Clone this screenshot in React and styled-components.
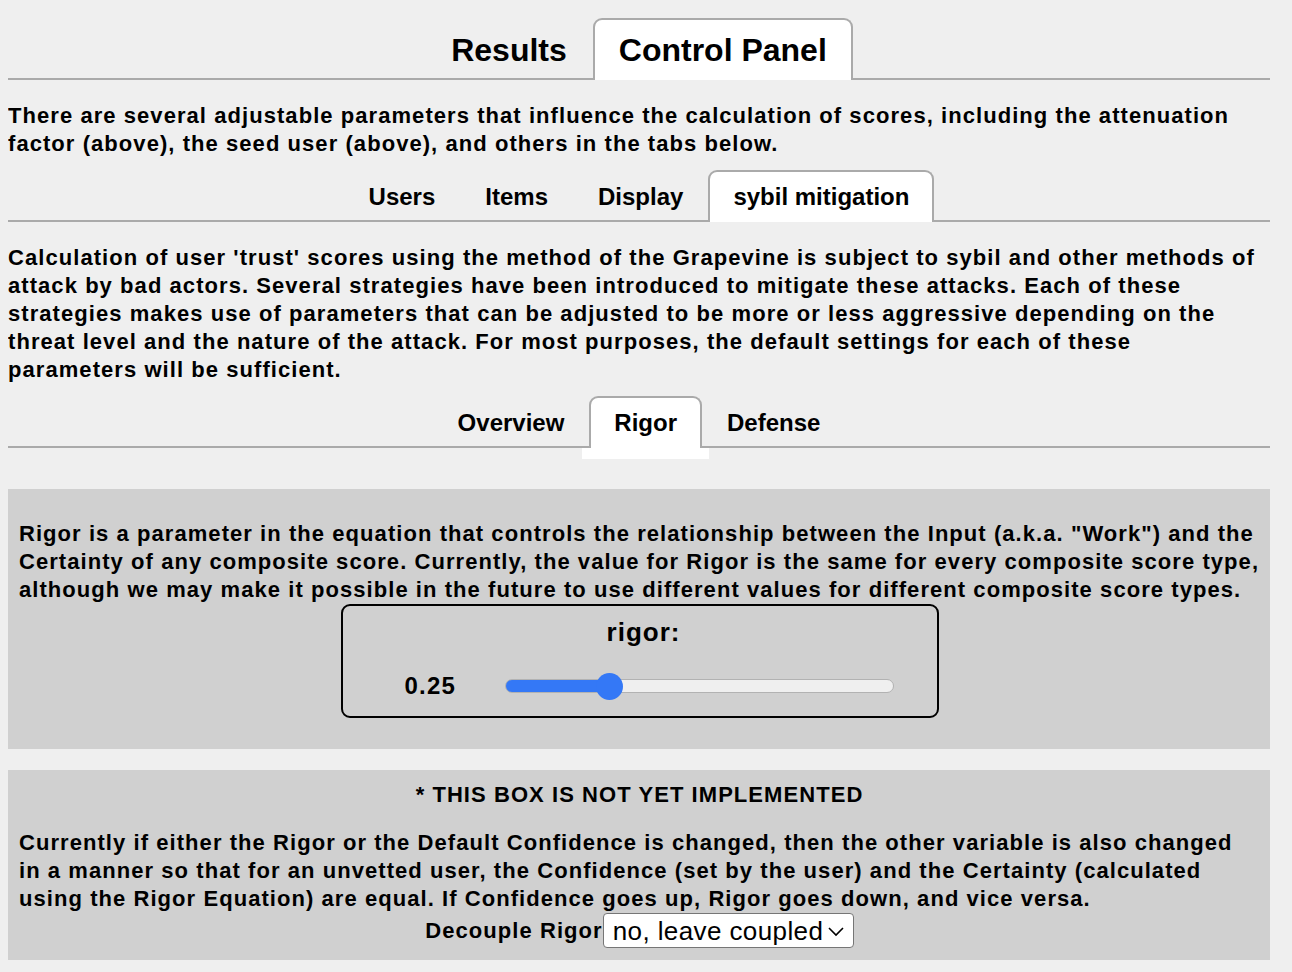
import React, { useState } from "react";
import styled, { createGlobalStyle } from "styled-components";

const GlobalStyle = createGlobalStyle`
  body {
    margin: 8px;
    background: #efefef;
    font-family: "Liberation Sans", Helvetica, Arial, sans-serif;
    color: #000;
  }
`;

const Page = styled.div`
  width: 1262px;
  padding-top: 10px;
`;

const TabBar = styled.div`
  display: flex;
  justify-content: center;
  align-items: flex-end;
  border-bottom: 2px solid #aaa;
`;

const Tab = styled.div`
  position: relative;
  font-weight: bold;
  font-size: ${(p) => (p.big ? "32px" : "24px")};
  line-height: ${(p) => (p.big ? "37px" : "28px")};
  padding: ${(p) => (p.big ? "12px 24px 11px" : "11px 23px")};
  border: 2px solid ${(p) => (p.active ? "#aaa" : "transparent")};
  border-bottom: 0;
  border-radius: 9px 9px 0 0;
  margin-bottom: -2px;
  background: ${(p) => (p.active ? "#fff" : "transparent")};
  white-space: nowrap;
  cursor: pointer;

  ${(p) =>
    p.foot &&
    `
    &::after {
      content: "";
      position: absolute;
      left: -9px;
      right: -9px;
      top: 100%;
      height: 11px;
      background: #fff;
    }
  `}
`;

const Text = styled.p`
  font-weight: bold;
  font-size: 22px;
  line-height: 28px;
  letter-spacing: 1.06px;
  margin: ${(p) => p.margin || "22px 0 12px"};
  text-align: ${(p) => p.align || "left"};
`;

const Panel = styled.div`
  background: #d0d0d0;
  padding: ${(p) => p.pad};
  margin-top: ${(p) => p.top};
`;

const SliderBox = styled.div`
  width: 594px;
  margin: 0 auto;
  border: 2px solid #000;
  border-radius: 9px;
  padding: 11px 0 14px;
`;

const SliderTitle = styled.div`
  text-align: center;
  font-weight: bold;
  font-size: 26px;
  line-height: 30px;
  letter-spacing: 1px;
  padding-left: 8px;
`;

const SliderRow = styled.div`
  display: flex;
  align-items: center;
  height: 32px;
  margin-top: 23px;
  padding-left: 62px;
  gap: 50px;
`;

const Value = styled.div`
  font-weight: bold;
  font-size: 24px;
  letter-spacing: 1.2px;
  width: 50px;
`;

const TRACK_W = 389;
const THUMB = 27;

const Range = styled.input`
  -webkit-appearance: none;
  appearance: none;
  width: ${TRACK_W}px;
  height: ${THUMB}px;
  margin: 0;
  background: transparent;

  &::-webkit-slider-runnable-track {
    height: 14px;
    border-radius: 7px;
    box-sizing: border-box;
    border: 1px solid #b2b2b2;
    background: linear-gradient(
      to right,
      #3478f6 0,
      #3478f6 ${(p) => p.fill}%,
      #efefef ${(p) => p.fill}%,
      #efefef 100%
    );
  }

  &::-webkit-slider-thumb {
    -webkit-appearance: none;
    width: ${THUMB}px;
    height: ${THUMB}px;
    border-radius: 50%;
    background: #3478f6;
    margin-top: -7.5px;
    border: 0;
  }
`;

const ChoiceRow = styled.div`
  display: flex;
  justify-content: center;
  align-items: center;
`;

const Label = styled.span`
  font-weight: bold;
  font-size: 22px;
  letter-spacing: 1.06px;
`;

const Select = styled.select`
  -webkit-appearance: none;
  appearance: none;
  font-family: "Liberation Sans", Helvetica, Arial, sans-serif;
  font-size: 26px;
  letter-spacing: 0.4px;
  height: 35px;
  width: 251px;
  padding: 0 30px 0 9px;
  border: 1px solid #767676;
  border-radius: 4px;
  color: #000;
  background: #fff
    url("data:image/svg+xml,%3Csvg xmlns='http://www.w3.org/2000/svg' width='18' height='12' viewBox='0 0 18 12'%3E%3Cpath d='M2 3l7 7 7-7' fill='none' stroke='%23000' stroke-width='1.6'/%3E%3C/svg%3E")
    no-repeat right 8px center;
`;

export default function App() {
  const [rigor, setRigor] = useState(0.25);
  const fill = ((rigor * (TRACK_W - THUMB) + THUMB / 2) / TRACK_W) * 100;

  return (
    <Page>
      <GlobalStyle />
      <TabBar>
        <Tab big>Results</Tab>
        <Tab big active>
          Control Panel
        </Tab>
      </TabBar>
      <Text>
        There are several adjustable parameters that influence the calculation of
        scores, including the attenuation factor (above), the seed user (above),
        and others in the tabs below.
      </Text>
      <TabBar>
        <Tab>Users</Tab>
        <Tab>Items</Tab>
        <Tab>Display</Tab>
        <Tab active>sybil mitigation</Tab>
      </TabBar>
      <Text margin="22px 12px 12px 0">
        Calculation of user 'trust' scores using the method of the Grapevine is
        subject to sybil and other methods of attack by bad actors. Several
        strategies have been introduced to mitigate these attacks. Each of these
        strategies makes use of parameters that can be adjusted to be more or less
        aggressive depending on the threat level and the nature of the attack. For
        most purposes, the default settings for each of these parameters will be
        sufficient.
      </Text>
      <TabBar>
        <Tab>Overview</Tab>
        <Tab active foot>
          Rigor
        </Tab>
        <Tab>Defense</Tab>
      </TabBar>

      <Panel top="41px" pad="31px 10px 31px 11px">
        <Text margin="0">
          Rigor is a parameter in the equation that controls the relationship
          between the Input (a.k.a. "Work") and the Certainty of any composite
          score. Currently, the value for Rigor is the same for every composite
          score type, although we may make it possible in the future to use
          different values for different composite score types.
        </Text>
        <SliderBox>
          <SliderTitle>rigor:</SliderTitle>
          <SliderRow>
            <Value>{rigor}</Value>
            <Range
              type="range"
              min="0"
              max="1"
              step="0.01"
              value={rigor}
              fill={fill}
              onChange={(e) => setRigor(Number(e.target.value))}
            />
          </SliderRow>
        </SliderBox>
      </Panel>

      <Panel top="21px" pad="11px 10px 12px 11px">
        <Text margin="0" align="center">
          * THIS BOX IS NOT YET IMPLEMENTED
        </Text>
        <Text margin="20px 0 0">
          Currently if either the Rigor or the Default Confidence is changed, then
          the other variable is also changed in a manner so that for an unvetted
          user, the Confidence (set by the user) and the Certainty (calculated
          using the Rigor Equation) are equal. If Confidence goes up, Rigor goes
          down, and vice versa.
        </Text>
        <ChoiceRow>
          <Label>Decouple Rigor</Label>
          <Select defaultValue="no">
            <option value="no">no, leave coupled</option>
            <option value="yes">yes, decouple</option>
          </Select>
        </ChoiceRow>
      </Panel>
    </Page>
  );
}
